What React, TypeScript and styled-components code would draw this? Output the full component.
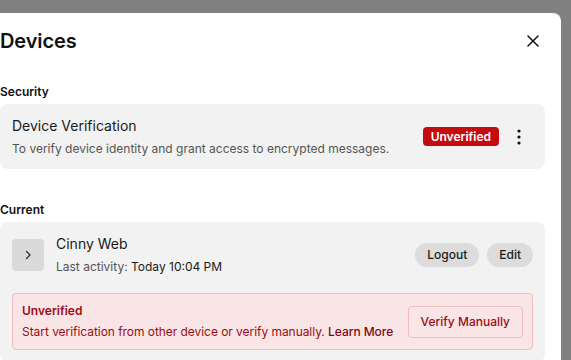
import React from 'react';
import styled, {createGlobalStyle} from 'styled-components';

const GlobalStyle = createGlobalStyle`
  html, body {
    margin: 0;
    padding: 0;
    height: 100%;
    overflow: hidden;
    background: #808080;
  }
  body {
    font-family: Inter, "Noto Sans", sans-serif;
    color: #1a1a1a;
  }
  #root {
    height: 100%;
  }
`;

const Overlay = styled.div`
  height: 100%;
  padding-top: 13px;
  box-sizing: border-box;
`;

const Panel = styled.div`
  margin-left: -16px;
  width: 577px;
  height: 400px;
  background: #ffffff;
  border-radius: 8px;
  display: flex;
  flex-direction: column;
`;

const Header = styled.header`
  height: 56px;
  padding: 0 12px 0 16px;
  display: flex;
  align-items: center;
  justify-content: space-between;
  flex-shrink: 0;
`;

const Title = styled.h1`
  margin: 0;
  font-size: 20px;
  font-weight: 600;
  letter-spacing: -0.1px;
  color: #111;
`;

const IconButton = styled.button<{ $w?: number }>`
  width: ${p => p.$w ?? 32}px;
  height: 32px;
  padding: 0;
  border: none;
  background: transparent;
  display: flex;
  align-items: center;
  justify-content: center;
  border-radius: 4px;
  cursor: pointer;
  color: #111;
`;

const Content = styled.div`
  padding: 15px 16px 0;
  display: flex;
  flex-direction: column;
  gap: 33px;
`;

const Section = styled.section`
  display: flex;
  flex-direction: column;
  gap: 4px;
`;

const Label = styled.div`
  font-size: 12px;
  line-height: 16px;
  font-weight: 600;
  color: #111;
`;

const Card = styled.div`
  background: #f2f2f2;
  border-radius: 8px;
  padding: 12px;
  display: flex;
  flex-direction: column;
  gap: 18px;
`;

const Row = styled.div`
  display: flex;
  align-items: center;
  gap: 12px;
`;

const Info = styled.div`
  flex: 1;
  display: flex;
  flex-direction: column;
  gap: 5px;
  min-width: 0;
`;

const Name = styled.div`
  font-size: 14px;
  line-height: 20px;
  color: #1a1a1a;
`;

const Sub = styled.div`
  font-size: 12px;
  line-height: 16px;
  color: #555;
`;

const Strong = styled.span`
  color: #1a1a1a;
`;

const Actions = styled.div<{ $gap: number }>`
  display: flex;
  align-items: center;
  gap: ${p => p.$gap}px;
`;

const Badge = styled.span`
  background: #c40b0f;
  color: #fff;
  font-size: 12px;
  font-weight: 600;
  line-height: 19px;
  padding: 0 8px;
  border-radius: 4px;
`;

const ChevronBox = styled.div`
  width: 32px;
  height: 32px;
  border-radius: 4px;
  background: #dadada;
  display: flex;
  align-items: center;
  justify-content: center;
  flex-shrink: 0;
`;

const PillButton = styled.button`
  height: 24px;
  padding: 0 12px;
  border: none;
  border-radius: 12px;
  background: #dcdcdc;
  font-family: inherit;
  font-size: 12px;
  font-weight: 500;
  color: #1a1a1a;
  cursor: pointer;
`;

const Banner = styled.div`
  background: #f9e5e6;
  border: 1px solid #f2bdc0;
  border-radius: 4px;
  padding: 9px;
  display: flex;
  align-items: center;
  gap: 12px;
  color: #9b0d14;
`;

const BannerText = styled.div`
  flex: 1;
  display: flex;
  flex-direction: column;
  gap: 5px;
  min-width: 0;
`;

const BannerTitle = styled.div`
  font-size: 12px;
  line-height: 16px;
  font-weight: 600;
`;

const BannerBody = styled.div`
  font-size: 12px;
  line-height: 16px;
  white-space: nowrap;
  letter-spacing: -0.05px;
`;

const LearnMore = styled.a`
  font-weight: 500;
  color: #7d0a10;
  text-decoration: none;
`;

const OutlineButton = styled.button`
  height: 32px;
  padding: 0 12px;
  border: 1px solid #f2bdc0;
  border-radius: 4px;
  background: transparent;
  font-family: inherit;
  font-size: 12px;
  font-weight: 500;
  color: #9b0d14;
  cursor: pointer;
  flex-shrink: 0;
`;

function CloseIcon() {
  return (
    <svg width="12" height="12" viewBox="0 0 12 12" fill="none">
      <path d="M1 1L11 11M11 1L1 11" stroke="#111" strokeWidth="1.5" strokeLinecap="round"/>
    </svg>
  );
}

function KebabIcon() {
  return (
    <svg width="4" height="16" viewBox="0 0 4 16">
      <circle cx="2" cy="2" r="1.6" fill="#111"/>
      <circle cx="2" cy="8" r="1.6" fill="#111"/>
      <circle cx="2" cy="14" r="1.6" fill="#111"/>
    </svg>
  );
}

function ChevronIcon() {
  return (
    <svg width="8" height="10" viewBox="0 0 8 10" fill="none">
      <path d="M2.5 1.5L6 5L2.5 8.5" stroke="#333" strokeWidth="1.3" strokeLinecap="round" strokeLinejoin="round"/>
    </svg>
  );
}

export function App() {
  return (
    <>
      <GlobalStyle/>
      <Overlay>
        <Panel>
          <Header>
            <Title>Devices</Title>
            <IconButton aria-label="Close"><CloseIcon/></IconButton>
          </Header>
          <Content>
            <Section>
              <Label>Security</Label>
              <Card>
                <Row>
                  <Info>
                    <Name>Device Verification</Name>
                    <Sub>To verify device identity and grant access to encrypted messages.</Sub>
                  </Info>
                  <Actions $gap={6}>
                    <Badge>Unverified</Badge>
                    <IconButton $w={28} aria-label="Options"><KebabIcon/></IconButton>
                  </Actions>
                </Row>
              </Card>
            </Section>
            <Section>
              <Label>Current</Label>
              <Card>
                <Row>
                  <ChevronBox><ChevronIcon/></ChevronBox>
                  <Info>
                    <Name>Cinny Web</Name>
                    <Sub>Last activity: <Strong>Today 10:04 PM</Strong></Sub>
                  </Info>
                  <Actions $gap={8}>
                    <PillButton>Logout</PillButton>
                    <PillButton>Edit</PillButton>
                  </Actions>
                </Row>
                <Banner>
                  <BannerText>
                    <BannerTitle>Unverified</BannerTitle>
                    <BannerBody>
                      Start verification from other device or verify manually. <LearnMore href="#">Learn More</LearnMore>
                    </BannerBody>
                  </BannerText>
                  <OutlineButton>Verify Manually</OutlineButton>
                </Banner>
              </Card>
            </Section>
          </Content>
        </Panel>
      </Overlay>
    </>
  );
}

export default App;
